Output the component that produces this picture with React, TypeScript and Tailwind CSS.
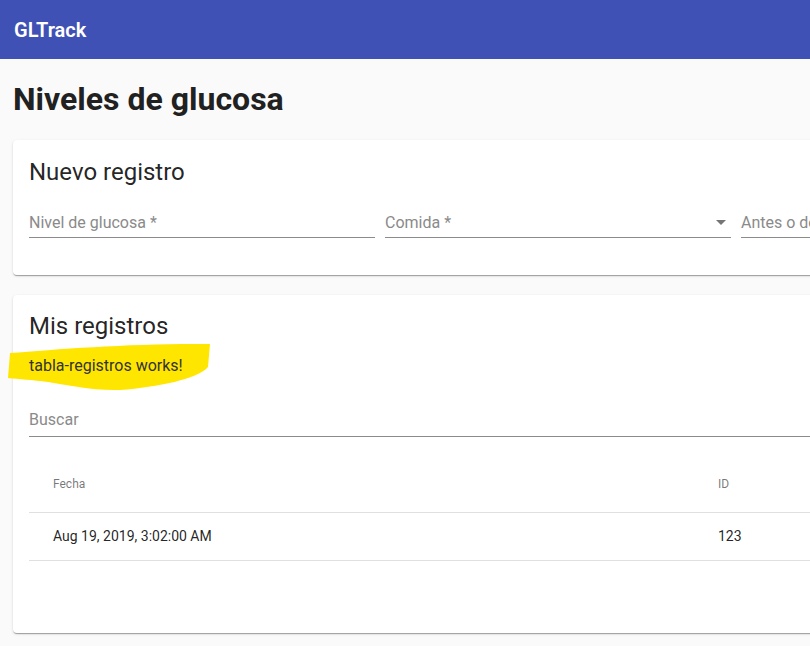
function Scribble() {
    return (
        <svg className="absolute left-[-21px] top-[-12px]" width="204" height="48" viewBox="0 0 204 48" aria-hidden>
            <path
                d="M2 10 C50 6 130 0 202 1 L200 24 C190 36 150 44 112 47 C85 48 60 42 40 39 C25 37 10 36 0 35 Z"
                fill="#ffe600"
            />
        </svg>
    );
}

function TextField({ label, select = false }: { label: string; select?: boolean }) {
    return (
        <div className="w-[346px] shrink-0">
            <div className="flex h-[30px] items-center justify-between border-b border-[#8c8c8c] text-[16px] text-[#8a8a8a]">
                <span>{label}</span>
                {select && (
                    <span className="mr-[5px] h-0 w-0 border-x-[5px] border-t-[5px] border-x-transparent border-t-[#757575]" />
                )}
            </div>
        </div>
    );
}

export default function App() {
    return (
        <div className="h-[646px] w-[810px] overflow-hidden bg-[#fafafa] font-['Roboto',sans-serif] text-[rgba(0,0,0,0.87)]">
            <header className="flex h-[59px] w-full items-center bg-[#3f51b5] px-[14px] text-[20px] font-semibold text-white">
                GLTrack
            </header>

            <main className="w-[1180px] px-[13px]">
                <h1 className="pt-[20px] pb-[21px] text-[32px] leading-[40px] font-bold text-[#212121]">Niveles de glucosa</h1>

                <section className="h-[135px] rounded-[4px] bg-white px-[16px] pt-[16px] shadow-[0_2px_1px_-1px_rgba(0,0,0,0.2),0_1px_1px_0_rgba(0,0,0,0.14),0_1px_3px_0_rgba(0,0,0,0.12)]">
                    <h2 className="text-[24px] leading-[32px]">Nuevo registro</h2>
                    <div className="mt-[20px] flex gap-[10px]">
                        <TextField label="Nivel de glucosa *" />
                        <TextField label="Comida *" select />
                        <TextField label="Antes o después *" />
                    </div>
                </section>

                <section className="mt-[20px] h-[338px] rounded-[4px] bg-white px-[16px] pt-[15px] shadow-[0_2px_1px_-1px_rgba(0,0,0,0.2),0_1px_1px_0_rgba(0,0,0,0.14),0_1px_3px_0_rgba(0,0,0,0.12)]">
                    <h2 className="text-[24px] leading-[32px]">Mis registros</h2>
                    <div className="relative mt-[13px] h-[22px] w-fit">
                        <Scribble />
                        <p className="relative text-[16px] leading-[22px] text-[#333]">tabla-registros works!</p>
                    </div>
                    <div className="mt-[26px] flex h-[34px] items-center border-b border-[#8c8c8c] text-[16px] text-[#8a8a8a]">
                        Buscar
                    </div>

                    <table className="mt-[19px] w-full border-collapse text-left">
                        <thead>
                            <tr className="h-[56px] border-b border-[#e0e0e0] text-[12px] text-[rgba(0,0,0,0.54)]">
                                <th className="w-[689px] pl-[24px] font-normal">Fecha</th>
                                <th className="font-normal">ID</th>
                            </tr>
                        </thead>
                        <tbody>
                            <tr className="h-[48px] border-b border-[#e0e0e0] text-[14px]">
                                <td className="pl-[24px]">Aug 19, 2019, 3:02:00 AM</td>
                                <td>123</td>
                            </tr>
                        </tbody>
                    </table>
                </section>
            </main>
        </div>
    );
}
